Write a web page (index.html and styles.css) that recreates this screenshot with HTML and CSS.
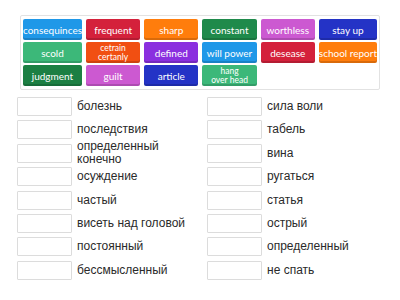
FILE: index.html
```html
<html>

<head>
  <title>
    Match up
  </title>
  <link rel="stylesheet" href="styles.css">
</head>

<body>
  <div id = "bank">
    <div class = "tile blue">consequinces</div>
    <div class = "tile red">frequent</div>
    <div class = "tile orange">sharp</div>
    <div class = "tile green">constant</div>
    <div class = "tile pink">worthless</div>
    <div class = "tile navy">stay up</div>
    <div class = "tile mint">scold</div>
    <div class = "tile flame two">cetrain<br>certanly</div>
    <div class = "tile purple">defined</div>
    <div class = "tile blue">will power</div>
    <div class = "tile red">desease</div>
    <div class = "tile orange">school report</div>
    <div class = "tile forest">judgment</div>
    <div class = "tile pink">guilt</div>
    <div class = "tile navy">article</div>
    <div class = "tile mint two">hang<br>over head</div>
  </div>

  <div id = "answers">
    <div class = "column">
      <div class = "row"><div class = "slot"></div><span class = "word">болезнь</span></div>
      <div class = "row"><div class = "slot"></div><span class = "word">последствия</span></div>
      <div class = "row"><div class = "slot"></div><span class = "word">определенный<br>конечно</span></div>
      <div class = "row"><div class = "slot"></div><span class = "word">осуждение</span></div>
      <div class = "row"><div class = "slot"></div><span class = "word">частый</span></div>
      <div class = "row"><div class = "slot"></div><span class = "word">висеть над головой</span></div>
      <div class = "row"><div class = "slot"></div><span class = "word">постоянный</span></div>
      <div class = "row"><div class = "slot"></div><span class = "word">бессмысленный</span></div>
    </div>
    <div class = "column">
      <div class = "row"><div class = "slot"></div><span class = "word">сила воли</span></div>
      <div class = "row"><div class = "slot"></div><span class = "word">табель</span></div>
      <div class = "row"><div class = "slot"></div><span class = "word">вина</span></div>
      <div class = "row"><div class = "slot"></div><span class = "word">ругаться</span></div>
      <div class = "row"><div class = "slot"></div><span class = "word">статья</span></div>
      <div class = "row"><div class = "slot"></div><span class = "word">острый</span></div>
      <div class = "row"><div class = "slot"></div><span class = "word">определенный</span></div>
      <div class = "row"><div class = "slot"></div><span class = "word">не спать</span></div>
    </div>
  </div>
</body>
</html>
```

FILE: styles.css
```css
body {
  margin: 0;
  padding: 0;
  background: #fff;
  font-family: "Liberation Sans", Arial, sans-serif;
}
div {
  box-sizing: border-box;
}
div#bank {
  width: 360px;
  margin: 15px 0 0 20px;
  padding: 3px 2px;
  border: 1px solid #e2e2e2;
  border-radius: 2px;
  display: grid;
  grid-template-columns: repeat(6, 1fr);
  grid-auto-rows: 21px;
  column-gap: 4px;
  row-gap: 2px;
}
.tile {
  display: flex;
  align-items: center;
  justify-content: center;
  text-align: center;
  color: #fff;
  font-family: Lato, "Open Sans", sans-serif;
  font-size: 10px;
  white-space: nowrap;
  border-radius: 2px;
  box-shadow: inset 0 -2px 0 rgba(0, 0, 0, 0.15);
}
.tile.two {
  font-size: 8.5px;
  line-height: 9px;
}
.blue { background: #1f98e8; }
.red { background: #d4213b; }
.orange { background: #ff7d0c; }
.green { background: #1f8a4b; }
.forest { background: #1c7f43; }
.pink { background: #cc59d1; }
.navy { background: #2433c6; }
.mint { background: #3cb879; }
.flame { background: #f14f12; }
.purple { background: #8a2fdf; }

div#answers {
  margin: 7px 0 0 17px;
  display: flex;
}
.column {
  width: 190px;
  display: flex;
  flex-direction: column;
  gap: 4.4px;
}
.row {
  height: 19px;
  display: flex;
  align-items: center;
}
.slot {
  width: 55px;
  height: 19px;
  flex: none;
  background: #fff;
  border: 1px solid #dcdcdc;
  border-radius: 1px;
}
.word {
  margin-left: 5px;
  font-size: 12px;
  line-height: 13px;
  color: #2a2a2a;
}
```
